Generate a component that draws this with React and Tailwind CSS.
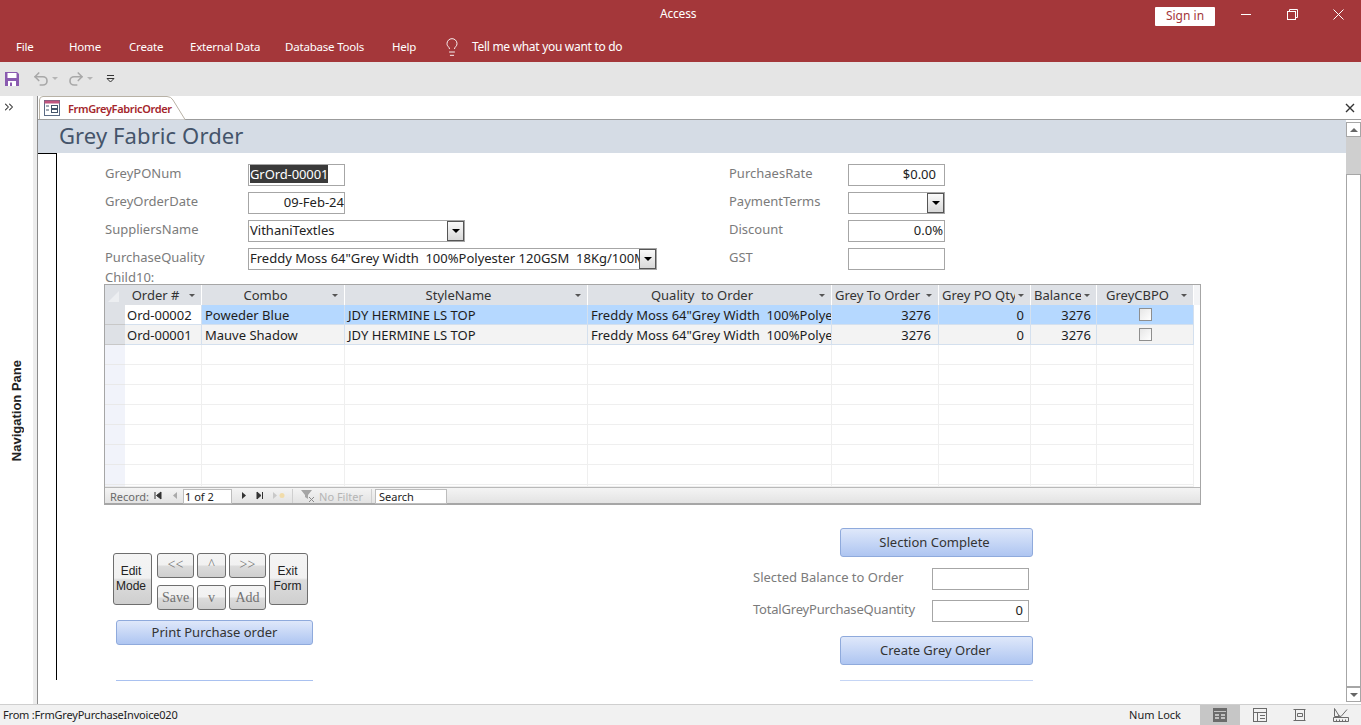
import React from "react";
import { ChevronsRight, Lightbulb, Undo2, Redo2 } from "lucide-react";

const uiFont = "font-['Noto_Sans',sans-serif]";
const gridCols = "grid grid-cols-[20px_77px_143px_243px_244px_107px_92px_66px_97px_6px]";

const columns = [
  { name: "Order #" },
  { name: "Combo" },
  { name: "StyleName" },
  { name: "Quality  to Order" },
  { name: "Grey To Order", clip: true },
  { name: "Grey PO Qty", clip: true },
  { name: "Balance", clip: true },
  { name: "GreyCBPO" },
];

const rows = [
  { order: "Ord-00002", combo: "Poweder Blue", active: true },
  { order: "Ord-00001", combo: "Mauve Shadow", active: false },
];

function Label({ children, className = "" }) {
  return <div className={`text-[13px] leading-[18px] text-[#7b7b7b] ${className}`}>{children}</div>;
}

function Box({ children, className = "" }) {
  return (
    <div className={`h-[22px] border border-[#a6a6a6] bg-white text-[13px] leading-[18px] text-[#222] overflow-hidden whitespace-nowrap ${className}`}>
      {children}
    </div>
  );
}

function ComboArrow() {
  return (
    <div className="flex h-[20px] w-[17px] shrink-0 items-center justify-center border border-[#555] bg-gradient-to-b from-[#fafafa] to-[#d8d8d8]">
      <div className="h-0 w-0 border-x-[4px] border-t-[4px] border-x-transparent border-t-black" />
    </div>
  );
}

function BlueButton({ children, className = "" }) {
  return (
    <div className={`flex items-center justify-center rounded-[3px] border border-[#8faadc] bg-gradient-to-b from-[#dfe8fa] to-[#aec5f1] text-[13px] text-[#333] ${className}`}>
      {children}
    </div>
  );
}

function GreyButton({ children, className = "" }) {
  return (
    <div className={`flex items-center justify-center rounded-[3px] border border-[#6e6e6e] bg-[linear-gradient(#f4f4f4_0%,#f1f1f1_48%,#dcdcdc_52%,#cfcfcf_100%)] ${className}`}>
      {children}
    </div>
  );
}

function HeaderCaret() {
  return <span className="ml-[3px] h-0 w-0 shrink-0 border-x-[3px] border-t-[3px] border-x-transparent border-t-[#555]" />;
}

function FormIcon() {
  return (
    <svg width="16" height="16" viewBox="0 0 16 16" className="shrink-0">
      <rect x="0.5" y="0.5" width="15" height="15" fill="#fff" stroke="#5b6b85" />
      <rect x="0.5" y="0.5" width="15" height="3" fill="#c0557f" />
      <path d="M2 6h3M2 10h3" stroke="#44546a" />
      <rect x="7.5" y="5.5" width="6" height="3" fill="none" stroke="#44546a" />
      <rect x="7.5" y="9.5" width="6" height="3" fill="none" stroke="#44546a" />
    </svg>
  );
}

function SaveIcon() {
  return (
    <svg width="16" height="16" viewBox="0 0 16 16">
      <path d="M1 1h12l2 2v12H1z" fill="#8a5bb0" />
      <rect x="3.5" y="2" width="9" height="5" fill="#fff" />
      <rect x="4" y="10" width="8" height="5" fill="#fff" />
      <rect x="6" y="11.5" width="2" height="3.5" fill="#8a5bb0" />
    </svg>
  );
}

function SmallCaret() {
  return <span className="h-0 w-0 border-x-[3px] border-t-[3px] border-x-transparent border-t-[#b5b5b5]" />;
}

function ViewIcon({ kind }) {
  return (
    <svg width="16" height="14" viewBox="0 0 16 14" fill="none" stroke="#6b6b6b">
      {kind === "form" && (
        <>
          <rect x="1" y="0" width="14" height="14" fill="#6b6b6b" stroke="none" />
          <path d="M2 3.5h12" stroke="#c4c4c4" />
          <path d="M3 7h4M3 10h4M9 7h4M9 10h4" stroke="#ddd" strokeWidth="1.4" />
        </>
      )}
      {kind === "sheet" && (
        <>
          <rect x="1.5" y="0.5" width="13" height="13" />
          <path d="M1.5 4.5h13M5.5 4.5v9M8 7.5h5M8 10.5h5" />
        </>
      )}
      {kind === "layout" && (
        <>
          <path d="M3.5 1.5h9v11h-9z" />
          <path d="M1.5 1.5h12M1.5 12.5h12M5.5 5.5h5v3h-5z" />
        </>
      )}
      {kind === "design" && (
        <>
          <path d="M1.5 0.5v8h5zM5 7.5l3 1 6-7" />
          <path d="M0.5 9.5h15v4h-15zM3.5 11.5v2M6.5 11.5v2M9.5 11.5v2M12.5 11.5v2" />
        </>
      )}
    </svg>
  );
}

function RecordBar() {
  return (
    <div className="col-span-full flex h-[16px] shrink-0 items-center border-t border-[#b9b9b9] bg-gradient-to-b from-[#f4f4f4] to-[#e3e3e3] pt-[1px] text-[11px] leading-none">
      <span className="ml-[5px] text-[#6a6a6a]">Record:</span>
      <svg width="28" height="10" viewBox="0 0 28 10" className="ml-[4px]">
        <path d="M2 1v7M8 1v7L3.5 4.5z" stroke="#333" fill="#333" />
        <path d="M24 1v7l-4-3.5z" fill="#aaa" />
      </svg>
      <div className="ml-[2px] flex h-[15px] w-[49px] items-center border border-[#bdbdbd] bg-white pl-[1px] text-[#222]">1 of 2</div>
      <svg width="50" height="10" viewBox="0 0 50 10" className="ml-[9px]">
        <path d="M1 1v7l4-3.5z" fill="#333" />
        <path d="M16 1v7l4-3.5zM21.5 1v7" fill="#333" stroke="#333" />
        <path d="M32 1v7l4-3.5z" fill="#c9c9c9" />
        <circle cx="41" cy="4.5" r="2.5" fill="#f1dcaa" />
      </svg>
      <div className="ml-[1px] flex h-full w-[80px] items-center border-l border-r border-[#cfcfcf]">
        <svg width="16" height="14" viewBox="0 0 16 14" className="ml-[7px]">
          <path d="M1 1h11L8 6v4L5 8V6z" fill="#a5a5a5" />
          <path d="M9 8l5 5M14 8l-5 5" stroke="#8a8a8a" />
        </svg>
        <span className="ml-[3px] text-[#b5b5b5]">No Filter</span>
      </div>
      <div className="ml-[3px] flex h-[15px] w-[72px] items-center border border-[#bdbdbd] bg-white pl-[3px] text-[#222]">Search</div>
    </div>
  );
}

function Datasheet() {
  const emptyRows = [0, 1, 2, 3, 4, 5, 6, 7];
  return (
    <div className="-ml-[1px] flex h-[221px] w-[1097px] flex-col border border-b-2 border-[#a6a6a6] bg-white">
      <div className={`${gridCols} h-[20px] bg-[#dee1e6] text-[13px] leading-[18px] text-[#333]`}>
        <div className="flex items-end pb-[3px] pl-[3px]">
          <div className="h-0 w-0 border-b-[11px] border-l-[11px] border-b-[#eceef1] border-l-transparent" />
        </div>
        {columns.map((c) => (
          <div key={c.name} className="flex items-center overflow-hidden border-r border-[#fff] pr-[6px]">
            <span className={`flex-1 overflow-hidden whitespace-pre ${c.clip ? "pl-[3px]" : "text-center"}`}>{c.name}</span>
            <HeaderCaret />
          </div>
        ))}
        <div className="bg-[#f3f4f6]" />
      </div>

      {rows.map((r) => {
        const bg = r.active ? "bg-[#b5d8ff]" : "bg-[#f3f3f3]";
        const cell = `${bg} h-[20px] overflow-hidden whitespace-pre border-b border-r border-[#d4e0ee] px-[3px] text-[13px] leading-[20px] text-[#1d1d1d]`;
        return (
          <div key={r.order} className={gridCols}>
            <div className="h-[20px] border-b border-[#c8c8c8] bg-[#dee1e6]" />
            <div className={`${cell} !pl-[2px] ${r.active ? "!bg-white" : ""}`}>{r.order}</div>
            <div className={cell}>{r.combo}</div>
            <div className={cell}>JDY HERMINE LS TOP</div>
            <div className={cell}>Freddy Moss 64"Grey Width  100%Polyester</div>
            <div className={`${cell} pr-[7px] text-right`}>3276</div>
            <div className={`${cell} pr-[6px] text-right`}>0</div>
            <div className={`${cell} pr-[5px] text-right`}>3276</div>
            <div className={`${cell} flex items-center justify-center`}>
              <div className="ml-[1px] h-[13px] w-[13px] border border-[#8e8e8e] bg-gradient-to-br from-[#e6e6e6] to-white" />
            </div>
          </div>
        );
      })}

      {emptyRows.map((i) => (
        <div key={i} className={`${gridCols} shrink-0 ${i === 7 ? "h-[2px]" : "h-[20px]"}`}>
          <div className="border-b border-[#e9e9e9] bg-[#f1f3fa]" />
          {columns.map((c) => (
            <div key={c.name} className="border-b border-r border-[#efefef]" />
          ))}
          <div />
        </div>
      ))}
      <RecordBar />
    </div>
  );
}

export default function App() {
  return (
    <div className={`flex h-[725px] w-[1361px] flex-col overflow-hidden bg-white ${uiFont}`}>
      {/* title bar + ribbon tabs */}
      <div className="h-[62px] shrink-0 bg-[#a4373a] text-white">
        <div className="relative flex h-[32px] items-center justify-end">
          <span className="absolute left-[660px] top-[5px] text-[12px] leading-[18px] tracking-[-0.2px]">Access</span>
          <div className="mr-[8px] flex h-[19px] w-[60px] items-center justify-center rounded-[1px] bg-white text-[12px] leading-none text-[#a4373a]">Sign in</div>
          <div className="flex h-full w-[46px] items-center justify-center pb-[4px]">
            <div className="h-[1px] w-[10px] bg-white" />
          </div>
          <div className="flex h-full w-[46px] items-center justify-center pb-[4px]">
            <svg width="11" height="11" viewBox="0 0 11 11" fill="none" stroke="#fff">
              <path d="M2.5 2.5V.5h8v8h-2" />
              <rect x="0.5" y="2.5" width="8" height="8" />
            </svg>
          </div>
          <div className="flex h-full w-[46px] items-center justify-center pb-[4px] pl-[1px]">
            <svg width="11" height="11" viewBox="0 0 11 11" stroke="#fff">
              <path d="M0.5 0.5l10 10M10.5 0.5l-10 10" />
            </svg>
          </div>
        </div>
        <div className="flex h-[30px] items-center pb-[1px] text-[11.5px] tracking-[-0.2px]">
          <span className="ml-[16px] w-[19px]">File</span>
          <span className="ml-[34px] w-[33px]">Home</span>
          <span className="ml-[27px] w-[34px]">Create</span>
          <span className="ml-[27px] w-[68px] whitespace-nowrap">External Data</span>
          <span className="ml-[27px] w-[80px] whitespace-nowrap">Database Tools</span>
          <span className="ml-[27px] w-[25px]">Help</span>
          <Lightbulb size={20} strokeWidth={1.1} className="ml-[25px]" />
          <span className="ml-[10px] text-[12px] tracking-[-0.3px]">Tell me what you want to do</span>
        </div>
      </div>

      {/* quick access bar */}
      <div className="flex h-[34px] shrink-0 items-center bg-[#e5e5e5] pb-[1px]">
        <div className="ml-[4px]"><SaveIcon /></div>
        <Undo2 size={18} strokeWidth={2.2} className="ml-[12px] text-[#a8a8a8]" />
        <div className="ml-[2px] flex"><SmallCaret /></div>
        <Redo2 size={18} strokeWidth={2.2} className="ml-[9px] text-[#a8a8a8]" />
        <div className="ml-[2px] flex"><SmallCaret /></div>
        <svg width="9" height="8" viewBox="0 0 9 8" className="ml-[13px]">
          <path d="M1 .5h7" stroke="#333" />
          <path d="M1 3.5h7L4.5 7z" fill="none" stroke="#333" />
        </svg>
      </div>

      <div className="flex min-h-0 flex-1">
        {/* navigation pane */}
        <div className="flex w-[38px] shrink-0 border-r border-[#8c8c8c]">
          <div className="flex w-[33px] flex-col items-center">
            <ChevronsRight size={14} strokeWidth={1.8} className="-ml-[15px] mt-[4px] text-[#333]" />
            <div className="-ml-[1px] mt-[246px] rotate-180 font-['Liberation_Sans',sans-serif] text-[13px] font-bold leading-none text-[#222] [writing-mode:vertical-rl]">
              Navigation Pane
            </div>
          </div>
          <div className="w-[4px] bg-[#ececec]" />
        </div>

        <div className="flex min-w-0 flex-1 flex-col">
          {/* object tab */}
          <div className="flex h-[24px] shrink-0 items-start justify-between border-b border-[#9b9b9b]">
            <div className="relative ml-[1px] flex h-[24px] w-[147px] items-center">
              <svg width="147" height="24" viewBox="0 0 147 24" fill="none" className="absolute inset-0">
                <path d="M0.5 23V4Q0.5 0.5 4 0.5H128Q132 0.5 134 4L146 23.5" fill="#fff" stroke="#b8b2a6" />
              </svg>
              <div className="relative ml-[5px]"><FormIcon /></div>
              <span className="relative ml-[8px] text-[11px] font-semibold leading-none tracking-[-0.35px] text-[#a4262c]">FrmGreyFabricOrder</span>
            </div>
            <svg width="10" height="10" viewBox="0 0 10 10" stroke="#333" strokeWidth="1.4" className="mr-[6px] mt-[7px]">
              <path d="M1 1l8 8M9 1l-8 8" />
            </svg>
          </div>

          <div className="flex min-h-0 flex-1">
            <div className="flex min-w-0 flex-1 flex-col">
              {/* form header */}
              <div className="flex h-[33px] shrink-0 items-center bg-[#d5dce5] pb-[3px] pl-[21px] text-[22px] leading-none tracking-[0.1px] text-[#44546a]">
                Grey Fabric Order
              </div>

              {/* form body */}
              <div className="flex min-h-0 flex-1">
                <div className="h-[527px] w-[19px] shrink-0 border-r border-t border-black" />
                <div className="min-w-0 flex-1 pl-[48px]">
                  <div className="flex pt-[11px]">
                    <div className="flex w-[624px] flex-col gap-[6px]">
                      <div className="flex h-[22px]">
                        <Label className="w-[143px]">GreyPONum</Label>
                        <Box className="w-[97px] pl-[1px] tracking-[-0.1px]"><span className="bg-[#3a3a3a] text-white">GrOrd-00001</span></Box>
                      </div>
                      <div className="flex h-[22px]">
                        <Label className="w-[143px]">GreyOrderDate</Label>
                        <Box className="w-[97px] text-right">09-Feb-24</Box>
                      </div>
                      <div className="flex h-[22px]">
                        <Label className="w-[143px]">SuppliersName</Label>
                        <Box className="flex h-[22px] w-[217px] justify-between pl-[1px]">VithaniTextles<ComboArrow /></Box>
                      </div>
                      <div className="flex h-[22px]">
                        <Label className="w-[143px]">PurchaseQuality</Label>
                        <Box className="flex h-[22px] w-[409px] justify-between pl-[1px]">
                          <span className="overflow-hidden whitespace-pre">Freddy Moss 64"Grey Width  100%Polyester 120GSM  18Kg/100Mtr</span>
                          <ComboArrow />
                        </Box>
                      </div>
                    </div>
                    <div className="flex flex-col gap-[6px]">
                      <div className="flex h-[22px]">
                        <Label className="w-[119px]">PurchaesRate</Label>
                        <Box className="w-[97px] pr-[8px] text-right">$0.00</Box>
                      </div>
                      <div className="flex h-[22px]">
                        <Label className="w-[119px]">PaymentTerms</Label>
                        <Box className="flex w-[97px] justify-end"><ComboArrow /></Box>
                      </div>
                      <div className="flex h-[22px]">
                        <Label className="w-[119px]">Discount</Label>
                        <Box className="w-[97px] pr-[1px] text-right">0.0%</Box>
                      </div>
                      <div className="flex h-[22px]">
                        <Label className="w-[119px]">GST</Label>
                        <Box className="w-[97px]" />
                      </div>
                    </div>
                  </div>

                  <Label className="h-[14px] !leading-[14px]">Child10:</Label>
                  <Datasheet />

                  {/* lower controls */}
                  <div className="flex">
                    <div className="w-[648px] pl-[8px] pt-[48px]">
                      <div className="flex h-[57px] items-start gap-[5px] font-['Liberation_Sans',sans-serif] text-[12px] leading-[15px] text-[#222]">
                        <GreyButton className="h-[52px] w-[39px] pr-[3px] text-center">Edit<br />Mode</GreyButton>
                        <div className="-mr-[2px] grid grid-cols-[37px_29px_37px] gap-x-[3px] gap-y-[7px] font-['Liberation_Serif',serif] text-[14px] text-[#727272]">
                          <GreyButton className="h-[25px] pb-[2px]">&lt;&lt;</GreyButton>
                          <GreyButton className="h-[25px] pb-[2px]">^</GreyButton>
                          <GreyButton className="h-[25px] pb-[2px]">&gt;&gt;</GreyButton>
                          <GreyButton className="h-[25px]">Save</GreyButton>
                          <GreyButton className="h-[25px]">v</GreyButton>
                          <GreyButton className="h-[25px]">Add</GreyButton>
                        </div>
                        <GreyButton className="h-[52px] w-[39px] pr-[2px] text-center">Exit<br />Form</GreyButton>
                      </div>
                      <BlueButton className="ml-[3px] mt-[10px] h-[25px] w-[197px]">Print Purchase order</BlueButton>
                      <div className="ml-[3px] mt-[35px] h-px w-[197px] bg-[#a9c1f0]" />
                    </div>
                    <div className="pt-[23px]">
                      <BlueButton className="ml-[87px] h-[29px] w-[193px] pr-[4px]">Slection Complete</BlueButton>
                      <div className="mt-[11px] flex h-[22px]">
                        <Label className="w-[179px]">Slected Balance to Order</Label>
                        <Box className="w-[97px]" />
                      </div>
                      <div className="mt-[10px] flex h-[22px]">
                        <Label className="w-[179px] whitespace-nowrap tracking-[-0.2px]">TotalGreyPurchaseQuantity</Label>
                        <Box className="w-[97px] pr-[5px] text-right">0</Box>
                      </div>
                      <BlueButton className="ml-[87px] mt-[14px] h-[29px] w-[193px] pr-[2px]">Create Grey Order</BlueButton>
                      <div className="ml-[87px] mt-[15px] h-px w-[193px] bg-[#c5d5f5]" />
                    </div>
                  </div>
                </div>
              </div>
            </div>

            {/* vertical scrollbar */}
            <div className="flex w-[15px] shrink-0 flex-col bg-white pb-[2px] pt-[2px]">
              <div className="flex h-[15px] items-center justify-center border border-[#a6a6a6] bg-white">
                <div className="h-0 w-0 border-x-[4px] border-b-[4px] border-x-transparent border-b-[#666]" />
              </div>
              <div className="h-[37px] bg-[#cfcfcf]" />
              <div className="flex-1 border border-[#a6a6a6] bg-white" />
              <div className="flex h-[15px] items-center justify-center border border-[#a6a6a6] bg-white">
                <div className="h-0 w-0 border-x-[4px] border-t-[4px] border-x-transparent border-t-[#666]" />
              </div>
            </div>
          </div>
        </div>
      </div>

      {/* status bar */}
      <div className="flex h-[21px] shrink-0 items-center border-t border-[#cfcfcf] bg-[#f1f1f1] text-[11px] text-[#222]">
        <span className="ml-[3px] tracking-[-0.2px]">From :FrmGreyPurchaseInvoice020</span>
        <span className="ml-auto mr-[19px]">Num Lock</span>
        <div className="flex h-full w-[40px] items-center justify-center bg-[#c6c6c6]"><ViewIcon kind="form" /></div>
        <div className="flex h-full w-[40px] items-center justify-center"><ViewIcon kind="sheet" /></div>
        <div className="flex h-full w-[40px] items-center justify-center"><ViewIcon kind="layout" /></div>
        <div className="flex h-full w-[41px] items-center justify-center"><ViewIcon kind="design" /></div>
      </div>
    </div>
  );
}
